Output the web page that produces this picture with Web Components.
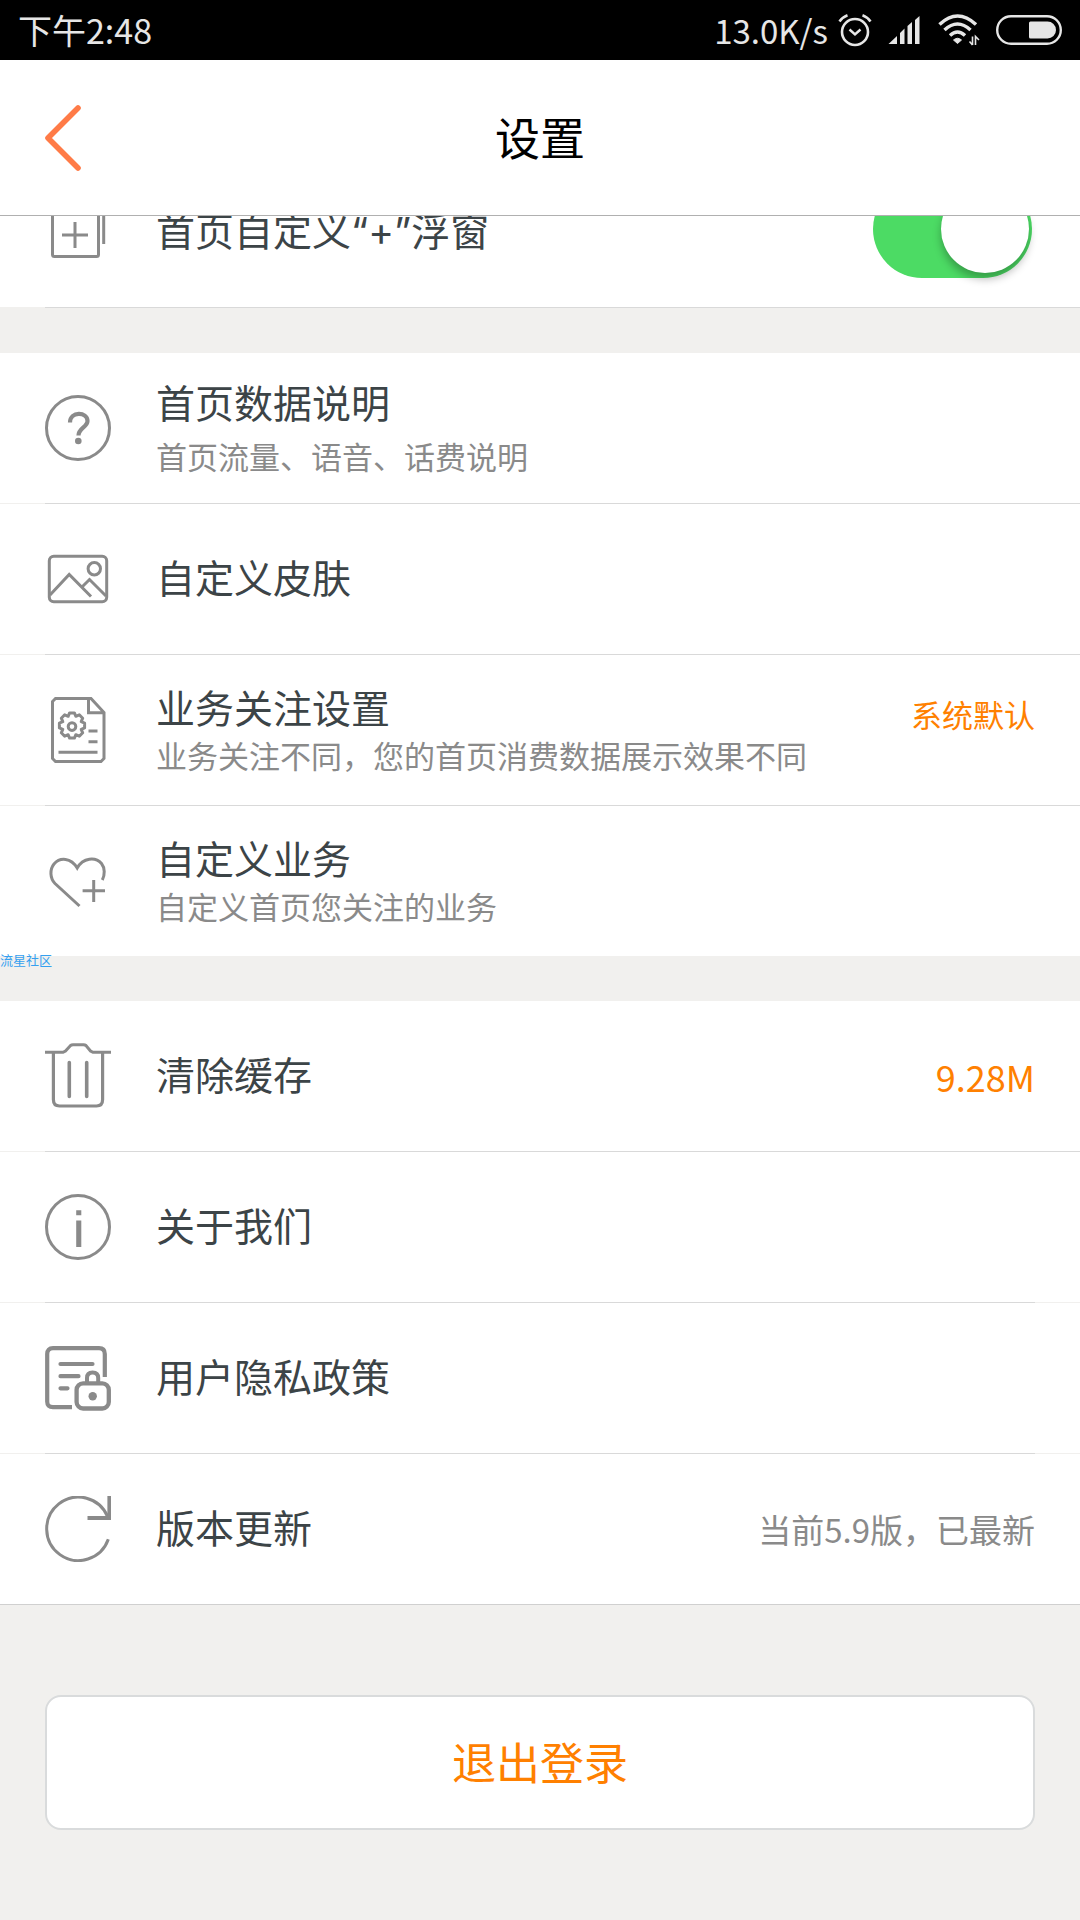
<!DOCTYPE html>
<html lang="zh-CN">
<head>
<meta charset="utf-8">
<meta name="viewport" content="width=device-width, initial-scale=1">
<title>设置</title>
<style>
  html, body { margin: 0; height: 100%; }
  body { background: #f1f0ee; font-family: "Noto Sans CJK SC", "Noto Sans", sans-serif; font-weight: 400; color: #3c4447; }
</style>
</head>
<body>
<settings-page></settings-page>

<template id="status-bar">
  <style>
    :host { display: flex; align-items: center; height: 60px; padding: 0 18px; background: #000; color: #e6e6e6; font-size: 34px; line-height: 60px; }
    .right { margin-left: auto; display: flex; align-items: center; gap: 16px; height: 60px; }
    .pair { display: flex; align-items: center; gap: 10px; font-size: 33px; }
    svg { display: block; fill: none; stroke: #e6e6e6; }
    svg.solid { fill: #e6e6e6; stroke: none; }
  </style>
  <span>下午2:48</span>
  <div class="right">
    <div class="pair">
      <span>13.0K/s</span>
      <svg width="34" height="34" viewBox="0 0 34 34" stroke-width="2.6"><circle cx="17" cy="19" r="13"/><path d="M11.500 16.500l5.500 5 5.500-5" stroke-width="2.400"/><path d="M1.500 8.500Q4.500 4 9.500 2.200M32.500 8.500Q29.500 4 24.500 2.200"/></svg>
    </div>
    <svg class="solid" width="34" height="30" viewBox="4 0 34 30"><path d="M4.500 29L13 21V29Z M16 18L20.500 13.500V29H16Z M23.500 11L28 7V29H23.500Z M31 5L35.500 1V29H31Z"/></svg>
    <svg width="42" height="32" viewBox="0 0 42 32" stroke-width="3.500"><path d="M1.500 10.500Q19.500-6.500 38 10.500M6.500 16Q19.500 4 32.500 16M12 21.500Q19.500 14.500 27 21.500"/><path d="M15.500 26Q19.500 22.500 23.500 26L19.500 29.500Z" fill="#e6e6e6" stroke-width="1"/><path d="M34.500 22.500V31M31.500 27.500L34.500 31M37.500 31V22.500L41 26" stroke-width="1.600"/></svg>
    <svg width="66" height="30" viewBox="0 0 66 30"><rect x="1.200" y="1.200" width="63.600" height="27.600" rx="13.800" stroke-width="2.400"/><path d="M34.500 6.500H51.500A8.500 8.500 0 0 1 51.500 23.500H34.500Q33 23.500 33 22V8Q33 6.500 34.500 6.500Z" fill="#e6e6e6" stroke="none"/></svg>
  </div>
</template>

<template id="nav-bar">
  <style>
    :host { display: grid; grid-template-columns: 1fr auto 1fr; align-items: center; height: 155px; padding: 0 45px; background: #fff; border-bottom: 1px solid #b0b0b0; color: #000; }
    button { border: 0; padding: 0; background: none; justify-self: start; }
    h1 { margin: 0; padding-bottom: 2px; font-size: 45px; line-height: 60px; font-weight: 400; }
    svg { display: block; }
  </style>
  <button type="button" aria-label="返回"><svg width="36" height="68" viewBox="0 0 36 68" fill="none" stroke="#ff7b47" stroke-width="5.600" stroke-linecap="round" stroke-linejoin="round"><path d="M33 4L3 34L33 64"/></svg></button>
  <h1><slot></slot></h1>
</template>

<template id="line-icon">
  <style>
    :host { display: block; flex: none; width: 66px; height: 66px; }
    svg { display: block; fill: none; stroke: #8a8a8a; stroke-width: 3; }
  </style>
</template>

<template id="toggle-switch">
  <style>
    :host { display: block; padding: 0 3px 6px 0; }
    input { appearance: none; display: block; box-sizing: border-box; margin: 0; width: 159px; height: 98px; border-radius: 49px; background: #ccc; padding: 5px 3px; }
    input:checked { background: #4cdb64; }
    input::before { content: ""; display: block; width: 88px; height: 88px; border-radius: 50%; background: #fff; box-shadow: 0 6px 8px rgba(0,0,0,.28); }
    input:checked::before { margin-left: auto; }
  </style>
  <input type="checkbox" checked aria-label="首页自定义“+”浮窗">
</template>

<template id="setting-row">
  <style>
    :host { display: block; }
    .row { box-sizing: border-box; display: flex; align-items: center; gap: 45px; width: 100%; height: 150px; margin: 0; padding: 0 45px; border: 0; background: #fff; font: inherit; color: inherit; text-align: left; }
    .text { flex: 1; display: flex; flex-direction: column; }
    .title { font-family: Inter, "Noto Sans CJK SC", sans-serif; font-size: 39px; line-height: 50px; }
    ::slotted([slot=note]) { font-size: 31px; line-height: 42px; color: #8a8a8a; }
    :host([roomy]) .text { gap: 6px; }
    ::slotted([slot=value]) { font-size: 33px; line-height: 48px; color: #8a8a8a; }
    ::slotted(.accent) { color: #ff8000; }
    ::slotted(.amount) { font-size: 36px; }
    ::slotted(.raised) { font-size: 31px; padding-bottom: 32px; }
    .rule { height: 1px; margin-left: 45px; background: #d9d9d9; }
    :host([rule=inset]) .rule { margin-right: 45px; }
    :host([rule=full]) .rule { margin-left: 0; background: #d0d0d0; }
    :host([rule=none]) .rule { display: none; }
  </style>
</template>

<template id="settings-group">
  <style>
    :host { display: block; position: relative; margin-bottom: 45px; }
  </style>
  <slot></slot>
</template>

<template id="settings-page">
  <style>
    :host { display: flex; flex-direction: column; min-height: 100%; }
    main { flex: 1; overflow: hidden; }
    .scrolled { margin-top: -59px; }
    .mark { position: absolute; left: 0; bottom: -12px; font-size: 13px; line-height: 16px; color: #35a0f0; }
    .logout { display: block; box-sizing: border-box; width: calc(100% - 90px); height: 135px; margin: 90px 45px; padding: 0 0 4px; border: 2px solid #d9dbdc; border-radius: 16px; background: #fff; color: #ff8000; font: inherit; font-size: 44px; line-height: 60px; }
  </style>
  <status-bar></status-bar>
  <nav-bar>设置</nav-bar>
  <main>
    <settings-group class="scrolled">
      <setting-row icon="float" control>首页自定义“+”浮窗<toggle-switch slot="value"></toggle-switch></setting-row>
    </settings-group>
    <settings-group>
      <setting-row icon="help" roomy>首页数据说明<span slot="note">首页流量、语音、话费说明</span></setting-row>
      <setting-row icon="picture">自定义皮肤</setting-row>
      <setting-row icon="config">业务关注设置<span slot="note">业务关注不同，您的首页消费数据展示效果不同</span><span slot="value" class="accent raised">系统默认</span></setting-row>
      <setting-row icon="heart" rule="none">自定义业务<span slot="note">自定义首页您关注的业务</span></setting-row>
      <span class="mark">流星社区</span>
    </settings-group>
    <settings-group>
      <setting-row icon="trash">清除缓存<span slot="value" class="accent amount">9.28M</span></setting-row>
      <setting-row icon="info" rule="inset">关于我们</setting-row>
      <setting-row icon="privacy" rule="inset">用户隐私政策</setting-row>
      <setting-row icon="refresh" rule="full">版本更新<span slot="value">当前5.9版，已最新</span></setting-row>
    </settings-group>
    <button class="logout" type="button">退出登录</button>
  </main>
</template>

<script>
  const ICONS = {
    float: '<rect x="7.500" y="11.500" width="46" height="46" rx="2"/><path d="M17 36H43M30 23V49M15 5.500H57Q58.700 5.500 58.700 7V45"/>',
    help: '<circle cx="33" cy="33" r="31.500" stroke-width="3"/><path d="M25 27.500C25 16 42.500 16.500 42.500 26C42.500 32 33.500 33 33.500 40.500" stroke-width="4.200"/><circle cx="33.300" cy="46" r="3.300" fill="#8a8a8a" stroke="none"/>',
    picture: '<rect x="4.300" y="10.300" width="57.400" height="45.400" rx="4.500" stroke-width="3"/><circle cx="49.300" cy="22.700" r="6.200" stroke-width="3"/><path d="M5 49L24.200 28.500L46 50.500M37 41L44.500 33.500L61 50" stroke-width="3"/>',
    config: '<path d="M46 1.500H10.500L7.500 4.500V61.500L10.500 64.500H56L59 61.500V15.500L46 1.500ZM43.500 1.500V15.700H59" stroke-width="3"/><path d="M24.600 15.900h4.800l1.400 3.400 3.500-1.500 3.400 3.400-1.500 3.500 3.400 1.400v4.800l-3.400 1.400 1.500 3.500-3.400 3.400-3.500-1.500-1.400 3.400h-4.800l-1.400-3.400-3.500 1.500-3.400-3.400 1.500-3.500-3.400-1.400v-4.800l3.400-1.400-1.500-3.500 3.400-3.400 3.500 1.500z" stroke-width="3" stroke-linejoin="round"/><circle cx="27" cy="29.600" r="3.800" stroke-width="3"/><path d="M43.500 34H52.500M43.500 44.700H52.500M13.500 55.300H52.500" stroke-width="3"/>',
    heart: '<path d="M34.500 58L10 35.500C5 30.500 4.500 21.500 9 16C15 9 26 9.500 32.200 20C38 9.500 50.500 8.500 56.500 15.500C60 20 60 27 57.300 32" stroke-width="3"/><path d="M37.600 42.700H60M48.700 32V54" stroke-width="3"/>',
    trash: '<path d="M0 9.300H18L20.500 8L25.500 2.500Q26.500 1.700 28 1.700H38.500Q40 1.700 41 2.500L45.500 8L48 9.300H66"/><path d="M8.400 9.500V56.500Q8.400 63 14.500 63H51.500Q57.600 63 57.600 56.500V9.500" stroke-width="3.200"/><path d="M24.300 19.500V53.500M41.700 19.500V53.500" stroke-width="3.600" stroke-linecap="round"/>',
    info: '<circle cx="33" cy="33" r="31.500"/><path d="M31.200 16.300H36.300V21.300H31.200ZM31.200 26.500H36.300V53H31.200Z" fill="#8a8a8a" stroke="none"/>',
    privacy: '<path d="M27 62.200H8Q2.200 62.200 2.200 56.500V9Q2.200 3.200 8 3.200H54Q59.800 3.200 59.800 9V32" stroke-width="4.200"/><path d="M15.500 19H47.500M15.500 31.200H33.500M15.500 43.300H22.500" stroke-width="4.200" stroke-linecap="round"/><rect x="31.600" y="38.300" width="32.200" height="25.200" rx="6.500" stroke-width="4.300"/><path d="M42 38V33Q42 27.500 47.600 27.500Q53.200 27.500 53.200 33V38" stroke-width="4"/><circle cx="47.700" cy="51.300" r="4.200" fill="#8a8a8a" stroke="none"/>',
    refresh: '<path d="M63.300 43.300A31.700 31.700 0 1 1 62.800 21"/><path d="M64.300 0V22H42.500" stroke-width="3.800"/>'
  };

  const stamp = (host, name) => {
    const root = host.attachShadow({ mode: 'open' });
    root.append(document.getElementById(name).content.cloneNode(true));
    return root;
  };

  for (const name of ['status-bar', 'nav-bar', 'toggle-switch', 'settings-group']) {
    customElements.define(name, class extends HTMLElement {
      constructor() { super(); stamp(this, name); }
    });
  }

  customElements.define('line-icon', class extends HTMLElement {
    connectedCallback() {
      if (this.shadowRoot) return;
      const root = stamp(this, 'line-icon');
      const holder = document.createElement('div');
      holder.innerHTML = `<svg width="66" height="66" viewBox="0 0 66 66" aria-hidden="true">${ICONS[this.getAttribute('name')]}</svg>`;
      root.append(holder);
    }
  });

  customElements.define('setting-row', class extends HTMLElement {
    connectedCallback() {
      if (this.shadowRoot) return;
      const root = stamp(this, 'setting-row');
      // A row holding its own control is a plain box; every other row is pressable.
      const row = document.createElement(this.hasAttribute('control') ? 'div' : 'button');
      if (row.localName === 'button') row.type = 'button';
      row.className = 'row';
      row.innerHTML = `<line-icon name="${this.getAttribute('icon')}"></line-icon>
        <span class="text"><span class="title"><slot></slot></span><slot name="note"></slot></span>
        <slot name="value"></slot>`;
      const rule = document.createElement('div');
      rule.className = 'rule';
      root.append(row, rule);
    }
  });

  customElements.define('settings-page', class extends HTMLElement {
    constructor() { super(); stamp(this, 'settings-page'); }
  });
</script>
</body>
</html>
